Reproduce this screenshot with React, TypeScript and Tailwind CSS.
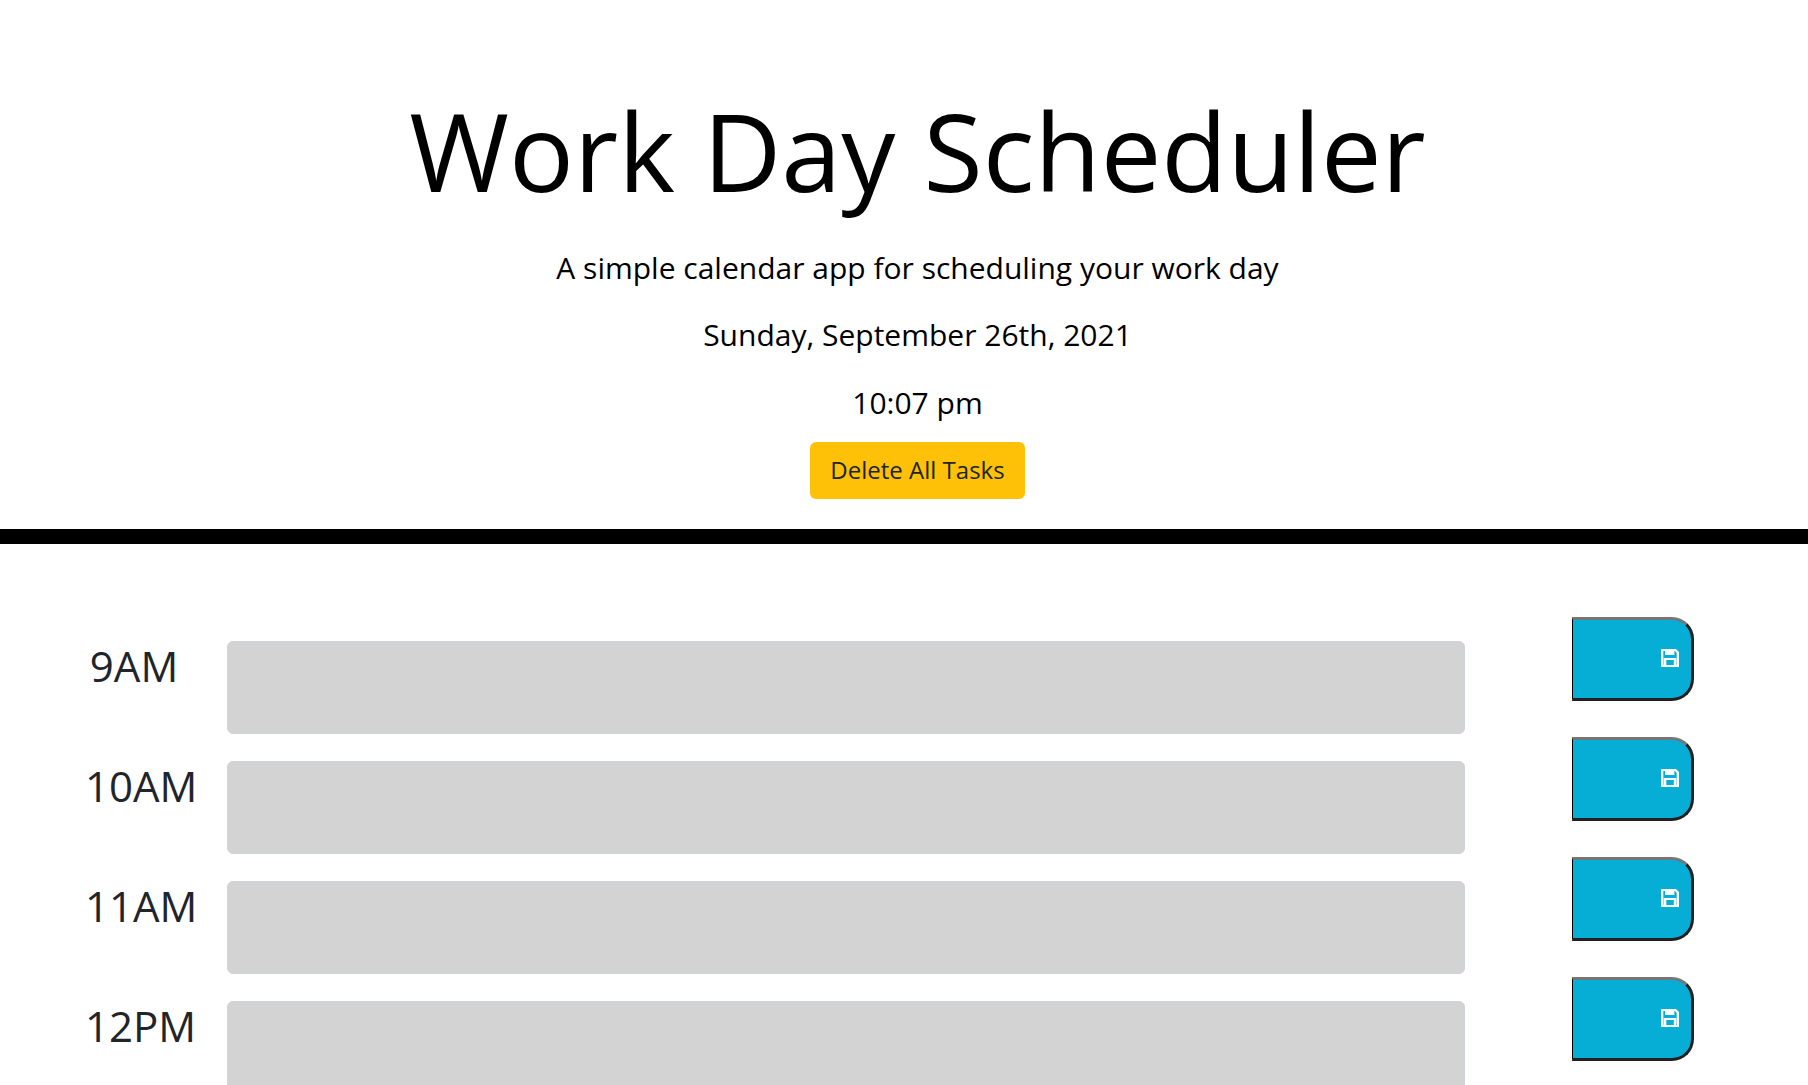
import { useState } from "react";

const hours = ["9AM", "10AM", "11AM", "12PM"];

function SaveIcon() {
  return (
    <svg viewBox="0 0 18 18" className="size-[18px] fill-white" aria-hidden="true">
      <path
        fillRule="evenodd"
        d="M0 0H15L18 3V18H0ZM2.3 2V16H2.7V9H15.3V16H15.7V4L14 2H13.4V6H4V2ZM5.3 11V16H12.8V11Z"
      />
    </svg>
  );
}

function TimeBlock({ hour }: { hour: string }) {
  const [task, setTask] = useState("");
  const id = `task-${hour}`;
  return (
    <li className="flex h-[120px] items-start">
      <label htmlFor={id} className="mt-[19px] w-[98px] shrink-0 text-center text-[42px] leading-[60px] whitespace-nowrap">
        {hour}
      </label>
      <textarea
        id={id}
        value={task}
        onChange={(e) => setTask(e.target.value)}
        className="mt-6 ml-11 h-[93px] min-w-0 flex-1 resize-none rounded-md border border-[#ced4da] bg-[#d3d3d3] px-4 py-2 text-2xl"
      />
      <button
        type="button"
        aria-label={`Save ${hour} task`}
        className="ml-[107px] flex h-[84px] w-[122px] shrink-0 items-center justify-end rounded-r-[22px] border-[3px] border-l border-t-[#767676] border-r-[#212121] border-b-[#212121] border-l-black bg-[#06aed5] pr-3 pb-0.5"
      >
        <SaveIcon />
      </button>
    </li>
  );
}

export default function App() {
  return (
    <div className="h-screen overflow-hidden bg-white font-['Open_Sans',sans-serif] text-[#212529]">
      <header className="flex flex-col items-center border-b-[15px] border-black pt-[86px] pb-[30px] pl-[27px] text-black">
        <h1 className="text-[108px] leading-[130px]">Work Day Scheduler</h1>
        <p className="mt-[29px] text-[30px] leading-[45px]">A simple calendar app for scheduling your work day</p>
        <p className="mt-[22px] text-[30px] leading-[45px]">Sunday, September 26th, 2021</p>
        <p className="mt-[23px] text-[30px] leading-[45px]">10:07 pm</p>
        <button type="button" className="mt-[17px] h-[57px] rounded-md bg-[#ffc107] px-5 pb-0.5 text-2xl text-[#212529]">
          Delete All Tasks
        </button>
      </header>
      <main className="pt-[73px] pr-[114px] pl-[85px]">
        <ul>
          {hours.map((hour) => (
            <TimeBlock key={hour} hour={hour} />
          ))}
        </ul>
      </main>
    </div>
  );
}
